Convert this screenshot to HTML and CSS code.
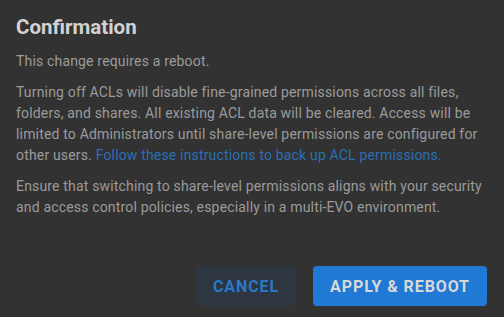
FILE: index.html
```html
<!DOCTYPE html>
<html>
<head>
<meta charset="utf-8">
<link rel="stylesheet" href="styles.css">
</head>
<body>
<div class="dialog">
  <h2 class="title">Confirmation</h2>
  <div class="content">
    <p>This change requires a reboot.</p>
    <p>Turning off ACLs will disable fine-grained permissions across all files, folders, and shares. All existing ACL data will be cleared. Access will be limited to Administrators until share-level permissions are configured for other users. <a class="link" href="#">Follow these instructions to back up ACL permissions.</a></p>
    <p>Ensure that switching to share-level permissions aligns with your security and access control policies, especially in a multi-EVO environment.</p>
  </div>
  <div class="actions">
    <button class="btn btn-cancel">Cancel</button>
    <button class="btn btn-primary">Apply &amp; Reboot</button>
  </div>
</div>
</body>
</html>
```

FILE: styles.css
```css
html, body {
  margin: 0;
  padding: 0;
  background: #323232;
  width: 504px;
  height: 317px;
  overflow: hidden;
}
.dialog {
  box-sizing: border-box;
  height: 317px;
  padding: 12px 17px 11px 16px;
  display: flex;
  flex-direction: column;
  font-family: Roboto, "Noto Sans", sans-serif;
}
.title {
  margin: 0;
  font-size: 20.5px;
  font-weight: 700;
  line-height: 30px;
  color: #d2d2d2;
}
.content {
  margin-top: 9px;
  font-size: 14px;
  letter-spacing: 0.17px;
  line-height: 21px;
  color: #9b9b9b;
  flex: 1;
}
.content p {
  margin: 0 0 10px 0;
}
.link {
  color: #2b6eb6;
  text-decoration: none;
}
.actions {
  display: flex;
  justify-content: flex-end;
  gap: 17px;
}
.btn {
  height: 40px;
  border: none;
  border-radius: 4px;
  font-family: Roboto, "Noto Sans", sans-serif;
  font-size: 16px;
  font-weight: 700;
  letter-spacing: 0.9px;
  text-transform: uppercase;
  padding: 0;
}
.btn-cancel {
  background: #2d3641;
  color: #2a79c9;
  width: 100px;
}
.btn-primary {
  background: #2079d4;
  color: #d8d8d8;
  width: 174px;
}
```
